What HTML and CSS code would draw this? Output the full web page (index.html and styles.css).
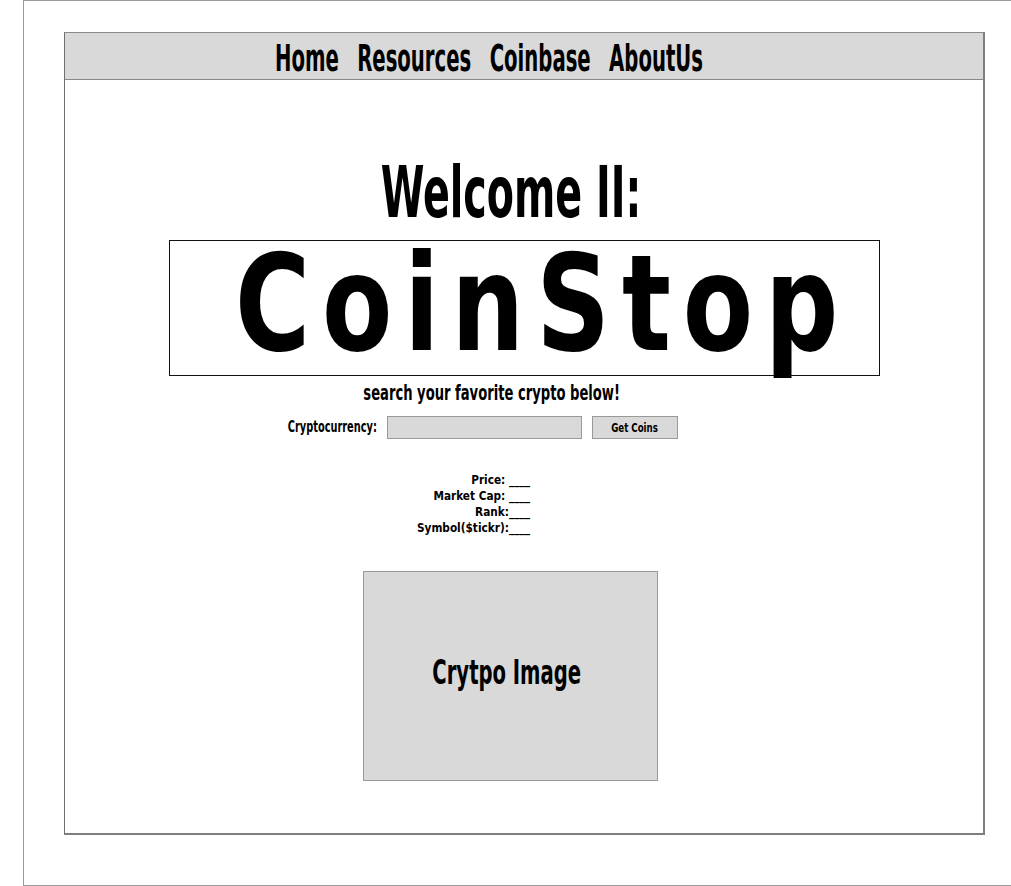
FILE: index.html
```html
<!DOCTYPE html>
<html lang="en">
<head>
<meta charset="utf-8">
<title>CoinStop</title>
<link rel="stylesheet" href="styles.css">
</head>
<body>
<div class="page">
  <div class="frame">
    <nav class="nav">
      <div class="nav-inner">
        <a class="nav-link" href="#">Home</a>
        <a class="nav-link" href="#">Resources</a>
        <a class="nav-link" href="#">Coinbase</a>
        <a class="nav-link" href="#">AboutUs</a>
      </div>
    </nav>
    <main class="content">
      <h1 class="welcome">Welcome II:</h1>
      <div class="logo-box"><span class="logo">CoinStop</span></div>
      <p class="tagline">search your favorite crypto below!</p>
      <form class="search">
        <label class="search-label" for="coin">Cryptocurrency:</label>
        <input class="search-input" id="coin" type="text">
        <button class="search-button" type="button"><span class="button-text">Get Coins</span></button>
      </form>
      <div class="stats">
        <div class="stat">Price: ____</div>
        <div class="stat">Market Cap: ____</div>
        <div class="stat">Rank:____</div>
        <div class="stat">Symbol($tickr):____</div>
      </div>
      <div class="image-box"><span class="image-text">Crytpo Image</span></div>
    </main>
  </div>
</div>
</body>
</html>
```
FILE: styles.css
```css
html, body {
  margin: 0;
  padding: 0;
  background: #ffffff;
}
body {
  font-family: "DejaVu Sans Condensed", "DejaVu Sans", sans-serif;
  font-weight: bold;
  color: #000;
}
.page {
  box-sizing: border-box;
  margin-left: 23px;
  height: 886px;
  border-top: 1px solid #9a9a9a;
  border-left: 1px solid #9a9a9a;
  border-bottom: 1px solid #9a9a9a;
  padding-top: 31px;
}
.frame {
  box-sizing: border-box;
  margin-left: 40px;
  width: 921px;
  height: 803px;
  border: 1px solid #7f7f7f;
  border-right-width: 2px;
  border-bottom-width: 2px;
  border-top-color: #8a8a8a;
  border-left-color: #6f6f6f;
}
.nav {
  box-sizing: border-box;
  height: 47px;
  padding: 4px 0 0 210px;
  background: #d9d9d9;
  border-bottom: 1px solid #888;
  display: flex;
  align-items: center;
}
.nav-inner {
  display: flex;
  gap: 32px;
  transform: scaleX(0.575);
  transform-origin: left center;
  white-space: nowrap;
}
.nav-link {
  color: #000;
  text-decoration: none;
  font-size: 38px;
  line-height: 1;
}
.content {
  display: flex;
  flex-direction: column;
  align-items: center;
}
.welcome {
  margin: 78px 0 0 -26px;
  font-size: 71px;
  line-height: 70px;
  font-weight: bold;
  white-space: nowrap;
  transform: scaleX(0.62);
}
.logo-box {
  box-sizing: border-box;
  margin-top: 12px;
  width: 711px;
  height: 136px;
  padding-top: 3px;
  border: 1px solid #111;
  display: flex;
  align-items: flex-start;
  justify-content: center;
}
.logo {
  font-size: 134px;
  line-height: 120px;
  letter-spacing: 14px;
  padding-left: 45px;
  white-space: nowrap;
  transform: scaleX(0.85);
}
.tagline {
  margin: 4px 0 0 -65px;
  font-size: 21px;
  line-height: 26px;
  white-space: nowrap;
  transform: scaleX(0.695);
}
.search {
  align-self: flex-start;
  margin: 10px 0 0 181px;
  display: flex;
  align-items: center;
  height: 22px;
}
.search-label {
  font-size: 16px;
  line-height: 22px;
  margin-right: 10px;
  white-space: nowrap;
  transform: scaleX(0.68);
  transform-origin: right center;
}
.search-input {
  box-sizing: border-box;
  width: 195px;
  height: 23px;
  background: #d9d9d9;
  border: 1px solid #999;
  margin: 0 10px 0 0;
  padding: 0;
}
.search-button {
  box-sizing: border-box;
  width: 86px;
  height: 23px;
  background: #d9d9d9;
  border: 1px solid #999;
  padding: 0;
  color: #000;
  display: flex;
  align-items: center;
  justify-content: center;
}
.button-text {
  font-family: "DejaVu Sans Condensed", "DejaVu Sans", sans-serif;
  font-weight: bold;
  font-size: 13px;
  white-space: nowrap;
  transform: scaleX(0.74);
}
.stats {
  align-self: flex-start;
  width: 140px;
  margin: 34px 0 0 325px;
  text-align: right;
  font-size: 13px;
  line-height: 16px;
}
.stat {
  white-space: nowrap;
  transform: scaleX(0.9);
  transform-origin: right center;
}
.image-box {
  box-sizing: border-box;
  align-self: flex-start;
  margin: 35px 0 0 298px;
  width: 295px;
  height: 210px;
  padding: 0 8px 8px 0;
  background: #d9d9d9;
  border: 1px solid #999;
  display: flex;
  align-items: center;
  justify-content: center;
}
.image-text {
  font-size: 33px;
  white-space: nowrap;
  transform: scaleX(0.66);
}
```
